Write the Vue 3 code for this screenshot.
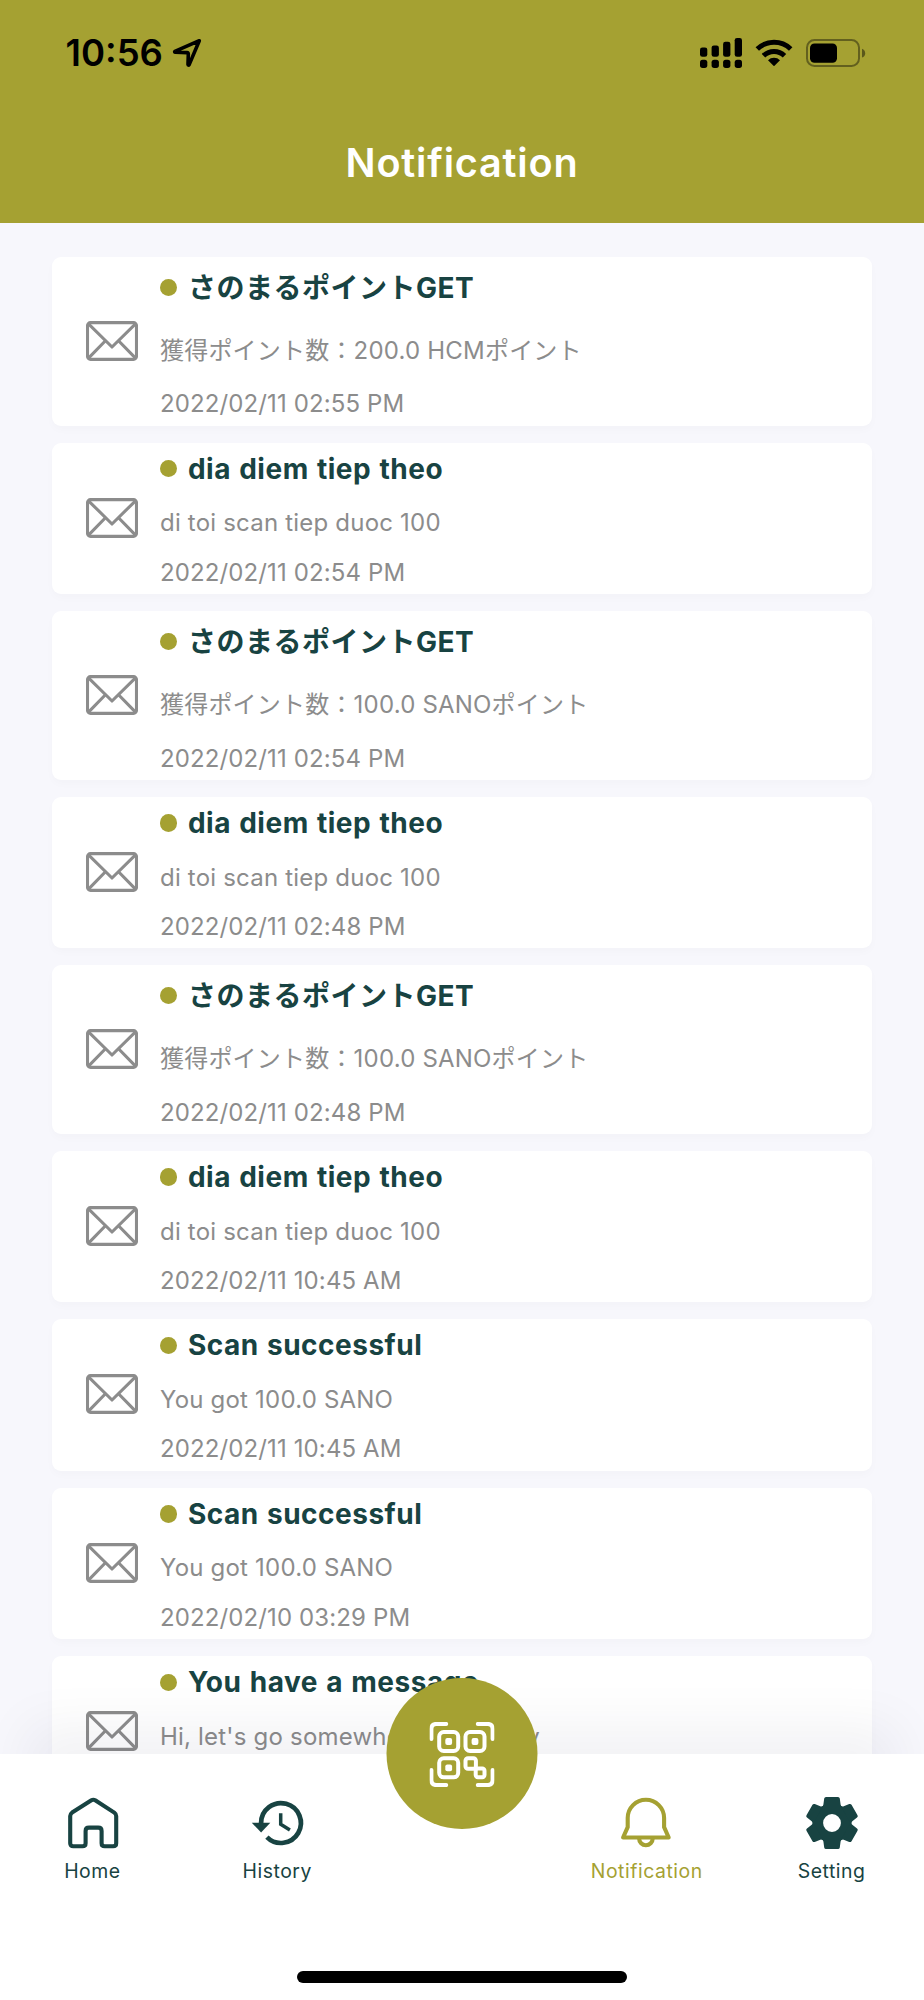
<script setup>
import { ref } from 'vue'

const notifications = ref([
  {
    title: 'さのまるポイントGET',
    body: '獲得ポイント数：200.0 HCMポイント',
    date: '2022/02/11 02:55 PM',
    tall: true,
  },
  { title: 'dia diem tiep theo', body: 'di toi scan tiep duoc 100', date: '2022/02/11 02:54 PM' },
  {
    title: 'さのまるポイントGET',
    body: '獲得ポイント数：100.0 SANOポイント',
    date: '2022/02/11 02:54 PM',
    tall: true,
  },
  { title: 'dia diem tiep theo', body: 'di toi scan tiep duoc 100', date: '2022/02/11 02:48 PM' },
  {
    title: 'さのまるポイントGET',
    body: '獲得ポイント数：100.0 SANOポイント',
    date: '2022/02/11 02:48 PM',
    tall: true,
  },
  { title: 'dia diem tiep theo', body: 'di toi scan tiep duoc 100', date: '2022/02/11 10:45 AM' },
  { title: 'Scan successful', body: 'You got 100.0 SANO', date: '2022/02/11 10:45 AM' },
  { title: 'Scan successful', body: 'You got 100.0 SANO', date: '2022/02/10 03:29 PM' },
  { title: 'You have a message', body: "Hi, let's go somewhere fun today", date: '' },
])

const activeTab = ref('notification')

const teeth = [0, 60, 120, 180, 240, 300]
</script>

<template>
  <div class="app">
    <header class="header">
      <div class="status-bar">
        <div class="status-left">
          <span class="clock">10:56</span>
          <svg class="location" viewBox="0 0 30 30">
            <path
              d="M27.3 2.7 L2.9 13.3 Q2.2 14.2 3.4 14.3 L15 14.6 Q16.3 14.7 16.3 16 L16 26.3 Q16.3 27.8 17.2 26.6 Z"
            />
          </svg>
        </div>
        <div class="status-right">
          <svg class="signal" viewBox="0 0 42 30">
            <rect x="0" y="9.5" width="7.3" height="9.3" rx="2.3" />
            <rect x="11.6" y="7.4" width="7.3" height="11.4" rx="2.3" />
            <rect x="23.1" y="3.8" width="7.3" height="15" rx="2.3" />
            <rect x="34.7" y="0" width="7.3" height="18.8" rx="2.3" />
            <rect x="0" y="21.7" width="7.3" height="8.2" rx="2.6" />
            <rect x="11.6" y="21.7" width="7.3" height="8.2" rx="2.6" />
            <rect x="23.1" y="21.7" width="7.3" height="8.2" rx="2.6" />
            <rect x="34.7" y="21.7" width="7.3" height="8.2" rx="2.6" />
          </svg>
          <svg class="wifi" viewBox="0 0 38 28">
            <path class="wave" d="M2.3 10 A24.2 24.2 0 0 1 35.7 10" />
            <path class="wave" d="M8.5 16.7 A15.2 15.2 0 0 1 29.5 16.7" />
            <path d="M13 21.2 A8.8 8.8 0 0 1 25 21.2 L19.5 26.8 Q19 27.3 18.5 26.8 Z" />
          </svg>
          <svg class="battery" viewBox="0 0 60 28">
            <rect class="shell" x="1" y="1" width="52" height="26" rx="7.5" />
            <rect x="4" y="4.5" width="27" height="19.3" rx="4.5" />
            <path class="cap" d="M56 9.8 Q59.2 11 59.2 14.2 Q59.2 17.4 56 18.6 Z" />
          </svg>
        </div>
      </div>
      <h1>Notification</h1>
    </header>

    <main class="list">
      <article
        v-for="(item, index) in notifications"
        :key="index"
        class="card"
        :class="{ tall: item.tall }"
      >
        <svg class="envelope" viewBox="0 0 52 40">
          <rect x="1.5" y="1.6" width="49" height="36.8" rx="3" />
          <path d="M2.5 2.8 L26 26 L49.5 2.8" />
          <path d="M2.5 37.2 L19.2 20 M49.5 37.2 L32.8 20" />
        </svg>
        <div class="content">
          <h2><span class="dot"></span>{{ item.title }}</h2>
          <p class="body">{{ item.body }}</p>
          <p class="date">{{ item.date }}</p>
        </div>
      </article>
    </main>

    <nav class="tab-bar">
      <div class="tabs">
        <a class="tab" :class="{ active: activeTab === 'home' }" @click="activeTab = 'home'">
          <svg class="icon line" viewBox="0 0 52 52">
            <path
              d="M25.4 3.3 Q27.3 2.2 29.2 3.3 L48.3 15.6 Q50.2 17 50.2 19 V46.2 Q50.2 49.3 47.1 49.3 H38.7 Q35.6 49.3 35.6 46.2 V34 Q35.6 30.6 32.2 30.6 H23 Q19.6 30.6 19.6 34 V46.2 Q19.6 49.3 16.5 49.3 H7.3 Q4.2 49.3 4.2 46.2 V19 Q4.2 17 6.1 15.6 Z"
            />
          </svg>
          <span>Home</span>
        </a>
        <a class="tab" :class="{ active: activeTab === 'history' }" @click="activeTab = 'history'">
          <svg class="icon line" viewBox="0 0 52 52">
            <path class="ring" d="M10.1 27 V26 A19.9 19.9 0 1 1 15.9 40.1" />
            <path class="hand" d="M29.7 16.2 V27.2 L38.9 32.9" />
            <path class="solid" d="M0.8 25.8 H19.3 L10.1 35.4 Z" />
          </svg>
          <span>History</span>
        </a>
        <span class="tab"></span>
        <a
          class="tab"
          :class="{ active: activeTab === 'notification' }"
          @click="activeTab = 'notification'"
        >
          <svg class="icon line" viewBox="0 0 52 52">
            <path d="M6.7 21 A18.2 18.2 0 0 1 43.1 21 V30.2 L47.7 40.5 H2.1 L6.7 30.2 Z" />
            <path d="M18.1 41.5 A6.8 6.8 0 0 0 31.7 41.5" />
          </svg>
          <span>Notification</span>
        </a>
        <a class="tab" :class="{ active: activeTab === 'setting' }" @click="activeTab = 'setting'">
          <svg class="icon" viewBox="-26 -26 52 52">
            <circle class="gear-ring" r="14.1" />
            <path
              v-for="angle in teeth"
              :key="angle"
              :transform="`rotate(${angle})`"
              d="M-10.5 -16 Q-8.8 -17 -8.6 -18.5 L-7.8 -24.4 Q-7.5 -26 -6 -26 H6 Q7.5 -26 7.8 -24.4 L8.6 -18.5 Q8.8 -17 10.5 -16 Z"
            />
          </svg>
          <span>Setting</span>
        </a>
      </div>
      <div class="home-indicator"></div>

      <button class="scan" aria-label="Scan">
        <svg class="qr" viewBox="0 0 65 65">
          <path d="M1.9 17 V6.9 Q1.9 1.9 6.9 1.9 H16.7" />
          <path d="M48.3 1.9 H58.1 Q63.1 1.9 63.1 6.9 V17" />
          <path d="M1.9 48 V58.1 Q1.9 63.1 6.9 63.1 H16.7" />
          <path d="M48.3 63.1 H58.1 Q63.1 63.1 63.1 58.1 V48" />
          <rect x="9.7" y="10" width="19" height="19" rx="4.5" />
          <rect x="36" y="10" width="19" height="19" rx="4.5" />
          <rect x="9.7" y="36.3" width="19" height="19" rx="4.5" />
          <rect x="36" y="36.3" width="10.4" height="10.4" rx="2.5" />
          <rect x="46.2" y="46.5" width="8.8" height="8.8" rx="2.2" />
          <rect class="fill" x="15.8" y="16.1" width="6.8" height="6.8" rx="2" />
          <rect class="fill" x="42.1" y="16.1" width="6.8" height="6.8" rx="2" />
          <rect class="fill" x="15.8" y="42.4" width="6.8" height="6.8" rx="2" />
        </svg>
      </button>
    </nav>
  </div>
</template>

<style>
body {
  margin: 0;
  background: #f7f7fc;
}
</style>

<style scoped>
.app {
  --olive: #a5a132;
  --green: #184342;
  --grey: #8c8c8c;
  display: flex;
  flex-direction: column;
  width: 924px;
  height: 2000px;
  overflow: hidden;
  background: #f7f7fc;
  font-family: Inter, 'Noto Sans CJK JP', sans-serif;
}

.header {
  flex: none;
  height: 222.6px;
  background: var(--olive);
}

.status-bar {
  display: flex;
  justify-content: space-between;
  height: 105px;
  padding: 0 58px 0 65.5px;
  color: #000;
}

.status-left,
.status-right {
  display: flex;
  align-items: center;
}

.clock {
  font-size: 36.5px;
  font-weight: 600;
  line-height: 105px;
  padding-top: 2px;
}

.location {
  width: 30px;
  height: 30px;
  margin-left: 9px;
  fill: none;
  stroke: #000;
  stroke-width: 3.6;
  stroke-linejoin: round;
}

.signal {
  width: 42px;
  height: 30px;
}

.wifi {
  width: 38px;
  height: 28px;
  margin-left: 13px;
}

.wave {
  fill: none;
  stroke: #000;
  stroke-width: 5;
}

.battery {
  width: 60px;
  height: 28px;
  margin-left: 13px;
}

.shell {
  fill: none;
  stroke: rgba(0, 0, 0, 0.4);
  stroke-width: 2;
}

.cap {
  fill: rgba(0, 0, 0, 0.45);
}

h1 {
  margin: 0;
  color: #fff;
  font-size: 39.6px;
  font-weight: 600;
  line-height: 116px;
  letter-spacing: 0.8px;
  text-align: center;
}

.list {
  display: flex;
  flex: 1;
  flex-direction: column;
  gap: 17.2px;
  min-height: 0;
  padding: 34.4px 52px 0;
  overflow: hidden;
}

.card {
  display: flex;
  flex: none;
  align-items: center;
  height: 151.2px;
  padding-left: 34px;
  border-radius: 9px;
  background: #fff;
  box-shadow: 0 4px 8px rgba(0, 0, 0, 0.02);
}

.card.tall {
  height: 168.6px;
}

.envelope {
  width: 52px;
  height: 40px;
  margin: 0 22px 1.5px 0;
  fill: none;
  stroke: var(--grey);
  stroke-width: 3.1;
  stroke-linejoin: round;
}

.content {
  padding-top: 2px;
}

h2 {
  display: flex;
  align-items: center;
  margin: 0;
  color: var(--green);
  font-size: 28px;
  font-weight: 700;
  line-height: 51.6px;
  letter-spacing: 0.5px;
  word-spacing: 1.2px;
  white-space: nowrap;
}

.dot {
  width: 17.4px;
  height: 17.4px;
  margin: 0 10.5px 1.6px 0;
  border-radius: 50%;
  background: var(--olive);
}

p {
  margin: 0;
  color: var(--grey);
  font-size: 24px;
  letter-spacing: 0.2px;
  white-space: nowrap;
}

.body {
  line-height: 55.4px;
}

.date {
  height: 44.2px;
  line-height: 44.2px;
  letter-spacing: 0.12px;
}

.tall .content {
  padding-top: 0;
}

.tall h2 {
  line-height: 62px;
}

.tall .body {
  line-height: 63.2px;
}

.tall .date {
  height: 43px;
  line-height: 43px;
}

.tab-bar {
  position: relative;
  display: flex;
  flex: none;
  flex-direction: column;
  justify-content: space-between;
  height: 246.3px;
  background: #fff;
  box-shadow: 0 -56px 48px -26px rgba(24, 24, 50, 0.05);
}

.tabs {
  display: grid;
  grid-template-columns: repeat(5, 1fr);
  padding-top: 43.6px;
}

.tab {
  display: flex;
  flex-direction: column;
  align-items: center;
  gap: 8px;
  color: var(--green);
  font-size: 19.4px;
  line-height: 28px;
  letter-spacing: 0.55px;
}

.tab.active {
  color: var(--olive);
}

.icon {
  width: 52px;
  height: 52px;
  overflow: visible;
  fill: currentColor;
}

.line {
  fill: none;
  stroke: currentColor;
  stroke-width: 4.1;
  stroke-linejoin: round;
}

.ring {
  stroke-width: 4.7;
}

.hand {
  stroke-width: 3.5;
  stroke-linejoin: miter;
}

.solid {
  fill: currentColor;
  stroke: none;
}

.gear-ring {
  fill: none;
  stroke: currentColor;
  stroke-width: 10.4;
}

.home-indicator {
  width: 330px;
  height: 11.4px;
  margin: 0 auto 17.3px;
  border-radius: 6px;
  background: #000;
}

.scan {
  position: absolute;
  top: -75.6px;
  left: 50%;
  display: flex;
  align-items: center;
  justify-content: center;
  width: 151px;
  height: 151px;
  padding: 0;
  border: none;
  border-radius: 50%;
  background: var(--olive);
  transform: translateX(-50%);
}

.qr {
  width: 65px;
  height: 65px;
  margin-top: 1px;
  fill: none;
  stroke: #fff;
  stroke-width: 4;
  stroke-linecap: round;
}

.fill {
  fill: #fff;
  stroke: none;
}
</style>
